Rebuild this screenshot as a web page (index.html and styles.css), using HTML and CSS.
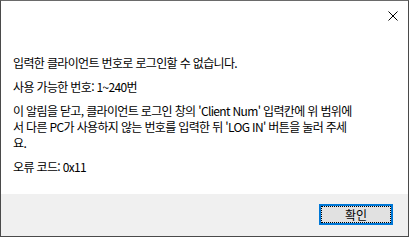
FILE: index.html
```html
<!DOCTYPE html>
<html lang="ko">
<head>
    <meta charset="UTF-8">
    <title>오류</title>
    <link rel="stylesheet" href="styles.css">
</head>
<body>

    <!-- Message box window -->
    <div class="msgbox">
        <div class="titlebar">
            <span class="close-btn">
                <svg width="10" height="10" viewBox="0 0 10 10">
                    <path d="M0.5 0.5 L9.5 9.5 M9.5 0.5 L0.5 9.5" stroke="#000" stroke-width="1" fill="none"/>
                </svg>
            </span>
        </div>

        <div class="content">
            <p>입력한 클라이언트 번호로 로그인할 수 없습니다.</p>
            <p>사용 가능한 번호: 1~240번</p>
            <p>
                <span class="line">이 알림을 닫고, 클라이언트 로그인 창의 'Client Num' 입력칸에 위 범위에</span>
                <span class="line">서 다른 PC가 사용하지 않는 번호를 입력한 뒤 'LOG IN' 버튼을 눌러 주세</span>
                <span class="line">요.</span>
            </p>
            <p>오류 코드: 0x11</p>
        </div>

        <div class="footer">
            <button class="ok-btn"><span class="focus">확인</span></button>
        </div>
    </div>

</body>
</html>
```

FILE: styles.css
```css
/* Page */
body, html {
    margin: 0;
    height: 100%;
    background-color: #3a3a3a;
}

/* Window frame */
.msgbox {
    box-sizing: border-box;
    width: 409px;
    height: 237px;
    border: 1px solid #4a4a4a;
    border-top-color: #6a6a6a;
    background-color: #fff;
    display: flex;
    flex-direction: column;
    font-family: "Noto Sans CJK KR", "Noto Sans", sans-serif;
    color: #000;
}

.titlebar {
    height: 30px;
    display: flex;
    justify-content: flex-end;
    align-items: center;
}

.close-btn {
    width: 30px;
    height: 30px;
    display: flex;
    justify-content: center;
    align-items: center;
}

/* Message text */
.content {
    flex: 1;
    padding: 24px 12px 0 12px;
    font-size: 12px;
    line-height: 16px;
    letter-spacing: -0.65px;
}

.content p {
    margin: 0 0 8px 0;
}

.content .line {
    display: block;
    white-space: nowrap;
}

/* Button row */
.footer {
    height: 42px;
    background-color: #f0f0f0;
    display: flex;
    justify-content: flex-end;
    align-items: flex-start;
    padding: 10px 15px 0 0;
    box-sizing: border-box;
}

.ok-btn {
    width: 74px;
    height: 21px;
    padding: 1px;
    border: 1px solid #0078d7;
    background-color: #e1e1e1;
    box-shadow: inset 0 0 0 1px #0078d7;
    font-family: "Noto Sans CJK KR", sans-serif;
    font-size: 12px;
    color: #000;
    display: flex;
}

.ok-btn .focus {
    flex: 1;
    border: 1px dotted #000;
    display: flex;
    justify-content: center;
    align-items: center;
    line-height: 14px;
}
```
